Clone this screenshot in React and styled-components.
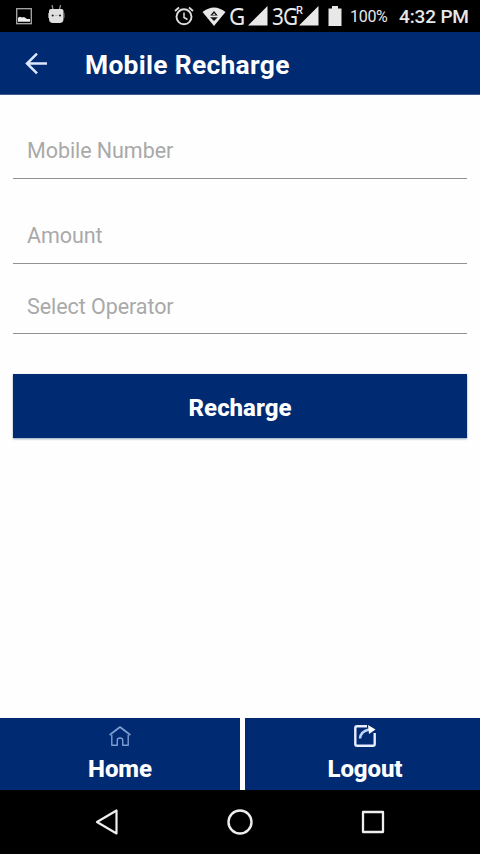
import React from 'react';
import styled, { createGlobalStyle } from 'styled-components';

const GlobalStyle = createGlobalStyle`
* {
    box-sizing: border-box;
}
body {
    margin: 0;
    background: #fff;
    font-family: Roboto, "Liberation Sans", sans-serif;
}
`;

const Screen = styled.div`
display: flex;
flex-direction: column;
width: 480px;
height: 854px;
background: #fefefe;
overflow: hidden;
`;

const StatusBar = styled.div`
display: flex;
flex: none;
align-items: center;
height: 32px;
padding: 0 11px 0 15px;
background: #000;
color: #e8e8e8;
`;

const StatusIcon = styled.svg`
display: block;
flex: none;
margin-left: ${({ $gap }) => $gap || 0}px;
`;

const Spacer = styled.div`
flex: 1;
`;

const Network = styled.span`
flex: none;
width: ${({ $width }) => $width}px;
margin-left: ${({ $gap }) => $gap}px;
font-family: "Noto Sans", sans-serif;
font-size: 23.5px;
font-weight: 400;
line-height: 31px;
letter-spacing: ${({ $spacing }) => $spacing || 0}px;
white-space: nowrap;
transform: scaleX(${({ $scale }) => $scale});
transform-origin: left;
`;

const Roaming = styled.span`
flex: none;
width: 7px;
height: 26px;
margin-right: -4px;
font-size: 11px;
font-weight: 500;
line-height: 15px;
`;

const Battery = styled.span`
flex: none;
width: 40px;
margin-left: 8px;
padding-top: 2px;
font-size: 16px;
line-height: 20px;
letter-spacing: -0.3px;
`;

const Clock = styled.span`
flex: none;
width: 70px;
margin-left: 9px;
padding-top: 2px;
font-size: 19px;
font-weight: 500;
line-height: 20px;
letter-spacing: -0.15px;
white-space: nowrap;
`;

const Header = styled.header`
display: flex;
flex: none;
align-items: center;
height: 63px;
padding: 0 24px;
background: #002b72;
border-bottom: 1px solid #3d5b8e;
`;

const BackButton = styled.button`
width: 24px;
height: 24px;
padding: 0;
border: none;
background: none;
cursor: pointer;
`;

const Title = styled.h1`
margin: 3px 0 0 37px;
color: #fff;
font-size: 26.4px;
font-weight: 700;
line-height: 32px;
letter-spacing: 0.3px;
white-space: nowrap;
`;

const Form = styled.form`
display: flex;
flex: 1;
flex-direction: column;
padding: 0 13px;
`;

const Field = styled.input`
flex: none;
width: 100%;
height: ${({ $height }) => $height}px;
padding: ${({ $height, $drop }) => $height - 60 + 2 * $drop}px 14px 4px;
border: none;
border-bottom: 1px solid #929292;
outline: none;
background: none;
color: #333;
font-family: inherit;
font-size: 21.5px;
letter-spacing: -0.07px;
&::placeholder {
    color: #a9a9a9;
    opacity: 1;
}
`;

const RechargeButton = styled.button`
flex: none;
height: 64px;
margin-top: 40px;
padding: 3px 0 0;
border: none;
background: #002b72;
box-shadow: 0 1px 2px #8ba1b4;
color: #fff;
font-family: inherit;
font-size: 24px;
font-weight: 800;
cursor: pointer;
`;

const Footer = styled.footer`
display: grid;
flex: none;
grid-template-columns: 240px 235px;
column-gap: 5px;
height: 72px;
`;

const Tab = styled.button`
display: flex;
flex-direction: column;
align-items: center;
padding: 6px 0 0 ${({ $inset }) => $inset || 0}px;
border: none;
background: #002b72;
color: #fff;
font-family: inherit;
font-size: 24px;
font-weight: 800;
line-height: 30px;
letter-spacing: -0.1px;
cursor: pointer;
svg {
    margin-bottom: 6px;
}
`;

const NavBar = styled.nav`
display: flex;
flex: none;
align-items: center;
justify-content: space-between;
height: 64px;
padding: 0 94px;
background: #000;
`;

const Signal = ({ gap }) => (
    <StatusIcon $gap={gap} width="20" height="20" viewBox="0 0 20 20">
        <path d="M19.5 0v19.5H0z" fill="#e8e8e8" />
    </StatusIcon>
)

const PhoneStatus = () => (
    <StatusBar>
        <StatusIcon width="18" height="18" viewBox="0 0 18 18">
            <rect x="1.7" y="1.7" width="14.6" height="15" fill="none" stroke="#aaa" strokeWidth="1.3" />
            <path d="M3 14.8v-4l2-1 2 .7 2-.5 3 2h3v2.8z" fill="#eee" />
        </StatusIcon>
        <StatusIcon $gap={15} width="17" height="22" viewBox="0 0 17 22">
            <path d="M4 0l1 4.5M12.5 0l-1 4.5" stroke="#999" strokeWidth="1.2" />
            <path d="M1 6q0-2 2-2h10.500q2 0 2 2v8q0 4-4 4H5q-4 0-4-4z" fill="#e0e0e0" />
            <path d="M.5 8v5M16 8v5" stroke="#888" />
            <circle cx="4.7" cy="10.5" r="1.1" fill="#222" />
            <circle cx="12" cy="10.5" r="1.1" fill="#222" />
            <path d="M7 10.5h3" stroke="#bbb" />
        </StatusIcon>
        <Spacer />
        <StatusIcon width="20" height="20" viewBox="0 0 20 20" fill="none" stroke="#ddd">
            <circle cx="10" cy="10.8" r="7.5" strokeWidth="1.9" />
            <path d="M1 5l4-3.500M19 5l-4-3.500" strokeWidth="1.8" />
            <path d="M10 6.500v5l3.500 2" strokeWidth="1.500" />
        </StatusIcon>
        <StatusIcon $gap={8} width="24" height="19" viewBox="0 0 24 19">
            <path d="M.5 5Q12-4 23.500 5L12 19z" fill="#e8e8e8" />
            <path d="M8.200 8.500L12 4l3.800 4.500zM8.200 10.200h7.600L12 14z" fill="#111" />
            <path d="M10.500 8L12 6l1.500 2z" fill="#ccc" />
        </StatusIcon>
        <Network $gap={3} $width={18} $scale={0.95}>G</Network>
        <Signal gap={1} />
        <Network $gap={4} $width={24} $spacing={-1} $scale={0.88}>3G</Network>
        <Roaming>R</Roaming>
        <Signal />
        <StatusIcon $gap={9} width="14" height="20" viewBox="0 0 14 20">
            <path d="M.5 2.500h3.500V0h6v2.500h3.500V20H.5z" fill="#e8e8e8" />
        </StatusIcon>
        <Battery>100%</Battery>
        <Clock>4:32 PM</Clock>
    </StatusBar>
)

const HomeIcon = () => (
    <svg width="24" height="24" viewBox="0 0 24 24" fill="none" stroke="#7f9dd2" strokeWidth="1.4" strokeLinejoin="round">
        <path d="M1.600 11L12 3l10.400 8" strokeWidth="1.7" />
        <path d="M3.800 11v10.200h5.500v-5.200q0-2 2.700-2t2.700 2v5.200h5.500V11" />
    </svg>
)

const LogoutIcon = () => (
    <svg width="24" height="24" viewBox="0 0 24 24" fill="none">
        <path d="M14 2.300H4q-1.700 0-1.700 1.700v16q0 1.700 1.700 1.700h16q1.700 0 1.700-1.700V9" stroke="#e6eeff" strokeWidth="2.4" />
        <path d="M7 14.500q.5-7 9-9" stroke="#bfd2f7" strokeWidth="2.6" />
        <path d="M15 1L22.500 5.400 16 10z" fill="#fff" />
    </svg>
)

const App = () => {
    return (
        <Screen>
            <GlobalStyle />
            <PhoneStatus />
            <Header>
                <BackButton aria-label="Back">
                    <svg width="24" height="24" viewBox="0 0 24 24" fill="none" stroke="#dce6ff" strokeWidth="2.5">
                        <path d="M23 12.500H3.500M13 2.700l-10 9.800 10 9.800" />
                    </svg>
                </BackButton>
                <Title>Mobile Recharge</Title>
            </Header>
            <Form onSubmit={(e) => e.preventDefault()}>
                <Field $height={84} $drop={4} placeholder="Mobile Number" />
                <Field $height={85} $drop={4} placeholder="Amount" />
                <Field $height={70} $drop={5} placeholder="Select Operator" />
                <RechargeButton>Recharge</RechargeButton>
            </Form>
            <Footer>
                <Tab><HomeIcon />Home</Tab>
                <Tab $inset={5}><LogoutIcon />Logout</Tab>
            </Footer>
            <NavBar>
                <svg width="26" height="26" viewBox="0 0 26 26" fill="none" stroke="#eee" strokeWidth="2.2" strokeLinejoin="round">
                    <path d="M22.500 1.500v23L3 13z" />
                </svg>
                <svg width="26" height="26" viewBox="0 0 26 26" fill="none" stroke="#eee" strokeWidth="2.4">
                    <circle cx="13" cy="13" r="11.5" />
                </svg>
                <svg width="26" height="26" viewBox="0 0 26 26" fill="none" stroke="#eee" strokeWidth="2.3" strokeLinejoin="round">
                    <rect x="3" y="3" width="20" height="20" />
                </svg>
            </NavBar>
        </Screen>
    )
}

export default App;
